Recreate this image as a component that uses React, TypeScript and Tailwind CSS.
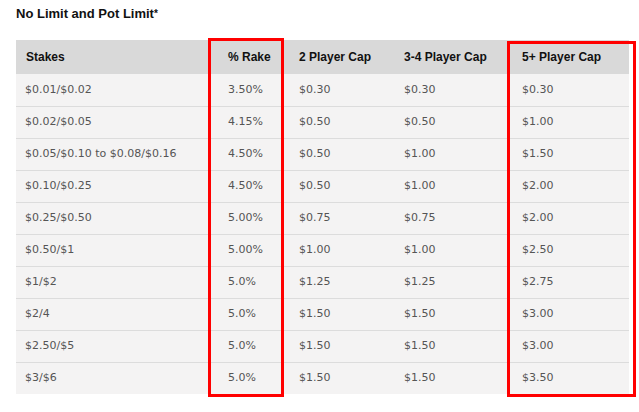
import React from "react";

interface Row {
  stakes: string;
  rake: string;
  cap2: string;
  cap34: string;
  cap5: string;
}

const rows: Row[] = [
  { stakes: "$0.01/$0.02", rake: "3.50%", cap2: "$0.30", cap34: "$0.30", cap5: "$0.30" },
  { stakes: "$0.02/$0.05", rake: "4.15%", cap2: "$0.50", cap34: "$0.50", cap5: "$1.00" },
  { stakes: "$0.05/$0.10 to $0.08/$0.16", rake: "4.50%", cap2: "$0.50", cap34: "$1.00", cap5: "$1.50" },
  { stakes: "$0.10/$0.25", rake: "4.50%", cap2: "$0.50", cap34: "$1.00", cap5: "$2.00" },
  { stakes: "$0.25/$0.50", rake: "5.00%", cap2: "$0.75", cap34: "$0.75", cap5: "$2.00" },
  { stakes: "$0.50/$1", rake: "5.00%", cap2: "$1.00", cap34: "$1.00", cap5: "$2.50" },
  { stakes: "$1/$2", rake: "5.0%", cap2: "$1.25", cap34: "$1.25", cap5: "$2.75" },
  { stakes: "$2/4", rake: "5.0%", cap2: "$1.50", cap34: "$1.50", cap5: "$3.00" },
  { stakes: "$2.50/$5", rake: "5.0%", cap2: "$1.50", cap34: "$1.50", cap5: "$3.00" },
  { stakes: "$3/$6", rake: "5.0%", cap2: "$1.50", cap34: "$1.50", cap5: "$3.50" },
];

export default function App() {
  return (
    <div className="relative w-[639px] h-[412px] bg-white overflow-hidden">
      {/* Title */}
      <div className="pl-[16px] pt-[5px] h-[40px]">
        <h3 className="text-[13px] leading-[18px] font-bold text-[#111] font-['Liberation_Sans',Arial,sans-serif]">
          No Limit and Pot Limit<span className="text-[10px] align-top">*</span>
        </h3>
      </div>

      {/* Rake table */}
      <table className="ml-[16px] w-[613px] table-fixed border-collapse">
        <colgroup>
          <col className="w-[202px]" />
          <col className="w-[71px]" />
          <col className="w-[105px]" />
          <col className="w-[118px]" />
          <col className="w-[117px]" />
        </colgroup>
        <thead>
          <tr className="h-[34px] bg-[#d9d9d9] text-left text-[12px] font-bold text-[#111] font-['Liberation_Sans',Arial,sans-serif]">
            <th className="pl-[10px] font-bold">Stakes</th>
            <th className="pl-[10px] font-bold">% Rake</th>
            <th className="pl-[10px] font-bold">2 Player Cap</th>
            <th className="pl-[10px] font-bold">3-4 Player Cap</th>
            <th className="pl-[10px] font-bold">5+ Player Cap</th>
          </tr>
        </thead>
        <tbody className="text-[11px] text-[#555] font-['DejaVu_Sans',Verdana,sans-serif]">
          {rows.map((r, i) => (
            <tr
              key={i}
              className={`h-[32px] bg-[#f4f3f3] ${i > 0 ? "border-t border-[#dcdcdc]" : ""}`}
            >
              <td className="pl-[9px]">{r.stakes}</td>
              <td className="pl-[10px]">{r.rake}</td>
              <td className="pl-[10px]">{r.cap2}</td>
              <td className="pl-[10px]">{r.cap34}</td>
              <td className="pl-[10px]">{r.cap5}</td>
            </tr>
          ))}
        </tbody>
      </table>

      {/* Red highlight boxes drawn over the table */}
      <div className="absolute left-[208px] top-[38px] w-[76px] h-[359px] border-[3px] border-[#ff0000]" />
      <div className="absolute left-[507px] top-[41px] w-[129px] h-[356px] border-[3px] border-[#ff0000]" />
    </div>
  );
}
